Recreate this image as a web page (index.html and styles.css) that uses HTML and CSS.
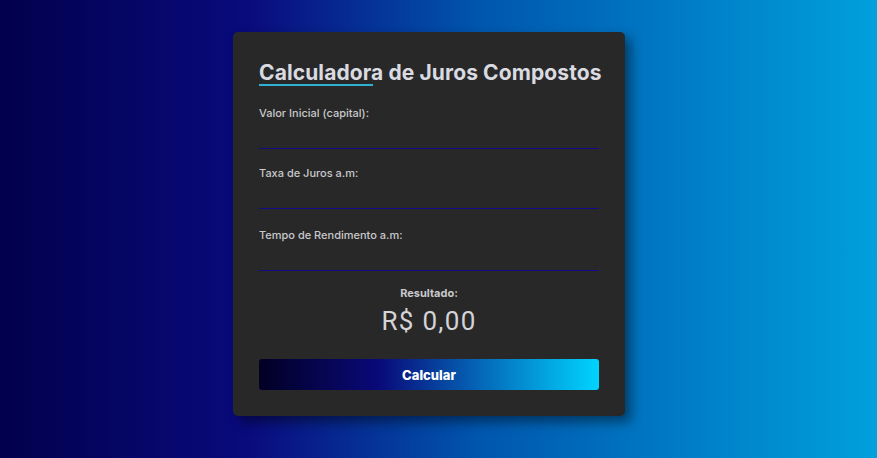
FILE: index.html
```html
<!DOCTYPE html>
<html lang="pt-BR">
<head>
<meta charset="utf-8">
<title>Calculadora de Juros Compostos</title>
<link rel="stylesheet" href="styles.css">
</head>
<body>
<main class="page">
  <section class="card">
    <h1 class="title">Calculadora de Juros Compostos</h1>
    <div class="field field-first">
      <label class="label" for="capital">Valor Inicial (capital):</label>
      <input class="input" id="capital" type="text">
    </div>
    <div class="field field-second">
      <label class="label" for="taxa">Taxa de Juros a.m:</label>
      <input class="input" id="taxa" type="text">
    </div>
    <div class="field field-third">
      <label class="label" for="tempo">Tempo de Rendimento a.m:</label>
      <input class="input" id="tempo" type="text">
    </div>
    <div class="result">
      <p class="result-label">Resultado:</p>
      <p class="result-value">R$ 0,00</p>
    </div>
    <button class="btn" type="button">Calcular</button>
  </section>
</main>
</body>
</html>
```
FILE: styles.css
```css
* { box-sizing: border-box; }
html, body { margin: 0; padding: 0; height: 100%; }
body {
  font-family: "Inter", "Noto Sans", sans-serif;
  background: linear-gradient(90deg, #02004c 0%, #090a7c 28%, #0a0f80 30%, #0057ae 55%, #00a0dc 100%);
  overflow: hidden;
}
.page {
  display: flex;
  justify-content: center;
  padding: 32px 19px 0 0;
}
.card {
  width: 392px;
  height: 384px;
  background: #282828;
  border-radius: 5px;
  padding: 26px;
  box-shadow: 6px 6px 12px rgba(0, 0, 0, 0.45);
}
.title {
  margin: 0;
  font-size: 21px;
  line-height: 30px;
  font-weight: 700;
  color: #d9dbe1;
  letter-spacing: 0.1px;
  white-space: nowrap;
}
.title::after {
  content: "";
  display: block;
  width: 114px;
  height: 2px;
  margin-top: -4px;
  background: #2fb1d2;
}
.field {
  display: flex;
  flex-direction: column;
}
.field-first { margin-top: 19px; }
.field-second { margin-top: 16px; }
.field-third { margin-top: 18px; }
.label {
  display: block;
  height: 16px;
  font-size: 11px;
  line-height: 16px;
  font-weight: 500;
  color: #c9c9cc;
}
.input {
  display: block;
  height: 28px;
  width: 100%;
  margin: 0;
  background: transparent;
  border: 0;
  border-bottom: 1px solid #120c88;
  border-radius: 0;
  outline: none;
  color: #ddd;
  padding: 0;
}
.result {
  margin-top: 14px;
  text-align: center;
}
.result-label {
  margin: 0;
  font-size: 11px;
  line-height: 16px;
  font-weight: 700;
  color: #c9c9cc;
}
.result-value {
  margin: 3px 0 0;
  font-family: "Roboto", sans-serif;
  font-size: 26px;
  line-height: 34px;
  font-weight: 400;
  letter-spacing: 1.3px;
  color: #d4d4d8;
}
.btn {
  display: block;
  width: 100%;
  height: 31px;
  margin-top: 21px;
  border: none;
  border-radius: 3px;
  background: linear-gradient(90deg, #020024 0%, #090979 35%, #00d4ff 100%);
  color: #ffffff;
  font-family: "Inter", sans-serif;
  font-size: 13px;
  font-weight: 800;
  cursor: pointer;
}
```
